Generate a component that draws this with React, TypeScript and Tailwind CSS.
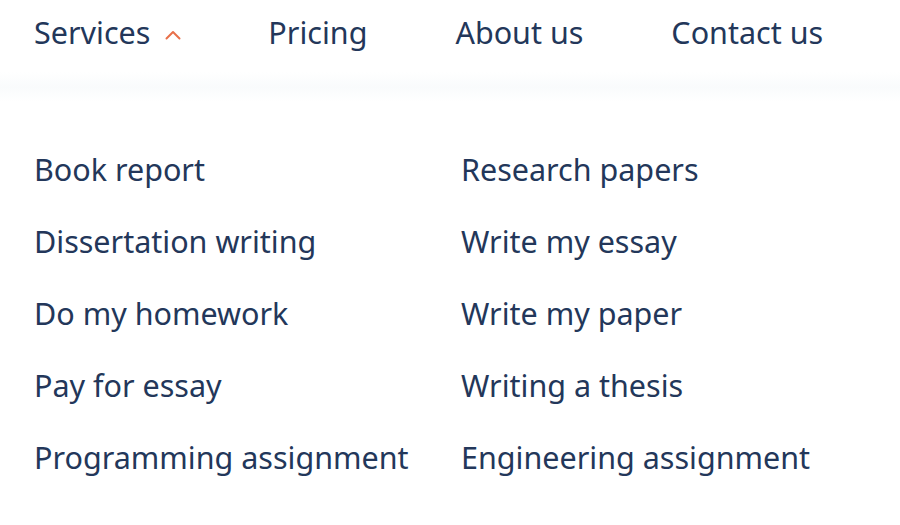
const navItems = ["Pricing", "About us", "Contact us"];

const leftLinks = [
  "Book report",
  "Dissertation writing",
  "Do my homework",
  "Pay for essay",
  "Programming assignment",
];

const rightLinks = [
  "Research papers",
  "Write my essay",
  "Write my paper",
  "Writing a thesis",
  "Engineering assignment",
];

function ChevronUp() {
  return (
    <svg width="16" height="10" viewBox="0 0 16 10" fill="none" className="mt-[6px]">
      <path d="M1.5 8.5 L8 2 L14.5 8.5" stroke="#e8704a" strokeWidth="2" strokeLinecap="round" strokeLinejoin="round" />
    </svg>
  );
}

export default function App() {
  return (
    <div className="h-[525px] w-[900px] overflow-hidden bg-white font-['Noto_Sans',sans-serif] text-[#23375a]">
      <header className="relative flex h-[72px] items-start pl-[34px] pt-[11px] text-[30.5px] leading-[42px]">
        <div className="flex items-center gap-[15px]">
          <span>Services</span>
          <ChevronUp />
        </div>
        <nav className="ml-[87px] flex gap-[88px]">
          {navItems.map((item) => (
            <a key={item} href="#" className="hover:text-[#e8704a]">
              {item}
            </a>
          ))}
        </nav>
      </header>
      <div className="h-[30px] bg-gradient-to-b from-white via-[#f9fbfc] to-white" />
      <div className="grid grid-cols-[427px_1fr] pl-[34px] pt-[46px] text-[30.5px] leading-[42px]">
        <ul className="flex flex-col gap-[30px]">
          {leftLinks.map((link) => (
            <li key={link}>{link}</li>
          ))}
        </ul>
        <ul className="flex flex-col gap-[30px]">
          {rightLinks.map((link) => (
            <li key={link}>{link}</li>
          ))}
        </ul>
      </div>
    </div>
  );
}
